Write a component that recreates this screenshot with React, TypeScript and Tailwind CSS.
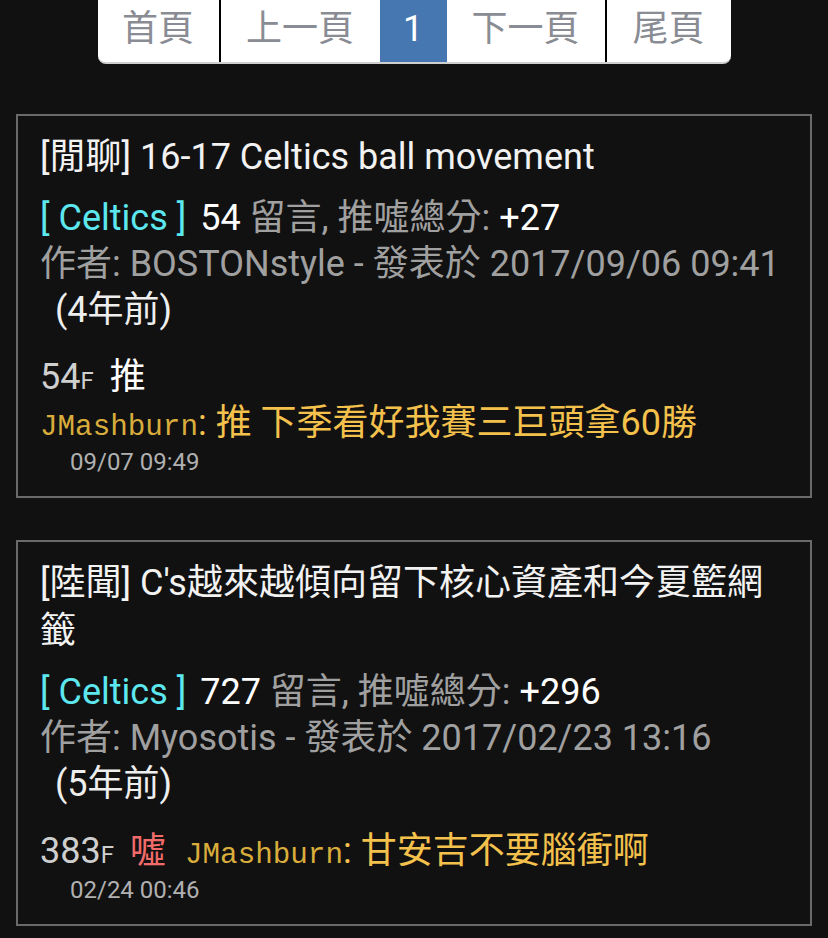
import React from "react";

const FONT = { fontFamily: 'Roboto, "Noto Sans CJK TC", sans-serif' };

function Pager() {
  const btn = "flex items-center justify-center h-full pt-[6px] text-[36px] leading-none";
  return (
    <div className="flex justify-center">
      <div className="flex h-[74px] -mt-[10px] rounded-b-[8px] overflow-hidden border-b-2 border-[#cfcfcf] bg-white">
        <div className={`${btn} w-[123px] text-[#8a8c94] border-r-2 border-black`}>首頁</div>
        <div className={`${btn} w-[159px] text-[#8a8c94]`}>上一頁</div>
        <div className={`${btn} w-[67px] bg-[#4677b0] text-white`}>1</div>
        <div className={`${btn} w-[160px] text-[#8a8c94] border-r-2 border-black`}>下一頁</div>
        <div className={`${btn} w-[124px] text-[#8a8c94]`}>尾頁</div>
      </div>
    </div>
  );
}

type Post = {
  title: string;
  count: string;
  score: string;
  author: string;
  date: string;
  ago: string;
  floor: string;
  tag: string;
  tagColor: string;
  inline: boolean;
  comment: string;
  ctime: string;
};

const posts: Post[] = [
  {
    title: "[閒聊] 16-17 Celtics ball movement",
    count: "54",
    score: "+27",
    author: "BOSTONstyle",
    date: "2017/09/06 09:41",
    ago: "(4年前)",
    floor: "54",
    tag: "推",
    tagColor: "text-white",
    inline: false,
    comment: "推 下季看好我賽三巨頭拿60勝",
    ctime: "09/07 09:49",
  },
  {
    title: "[陸聞] C's越來越傾向留下核心資產和今夏籃網籤",
    count: "727",
    score: "+296",
    author: "Myosotis",
    date: "2017/02/23 13:16",
    ago: "(5年前)",
    floor: "383",
    tag: "噓",
    tagColor: "text-[#f26b6b]",
    inline: true,
    comment: "甘安吉不要腦衝啊",
    ctime: "02/24 00:46",
  },
];

function Comment({ p }: { p: Post }) {
  return (
    <span>
      <span
        className="text-[29.25px] leading-none text-[#d9ad3b]"
        style={{ fontFamily: '"Liberation Mono", monospace' }}
      >
        JMashburn
      </span>
      <span className="text-[#f3c14c]">: {p.comment}</span>
    </span>
  );
}

function Card({ p }: { p: Post }) {
  return (
    <div className="border-2 border-[#6a6a6a] px-[22px] pt-[17px] pb-[18px]">
      <div className="text-[36px] leading-[48px] text-[#f2f2f2]">{p.title}</div>
      <div className="mt-[14px] text-[36px] leading-[46px]">
        <div>
          <span className="text-[#5ce8ee]">[ Celtics ]</span>
          <span className="ml-[14px] text-white">{p.count} </span>
          <span className="text-[#a0a0a0]">留言, 推噓總分: </span>
          <span className="text-white">{p.score}</span>
        </div>
        <div className="text-[#a0a0a0]">
          作者: {p.author} - 發表於 {p.date}
        </div>
        <div className="pl-[15px] text-[#eeeeee]">{p.ago}</div>
      </div>
      <div className="mt-[21px] text-[36px] leading-[46px]">
        <div className="flex items-baseline whitespace-nowrap h-[46px]">
          <span className="text-[#cfcfcf]">{p.floor}</span>
          <span className="text-[24px] leading-none text-[#cfcfcf]">F</span>
          <span className={`ml-[16px] ${p.tagColor}`}>{p.tag}</span>
          {p.inline && (
            <span className="ml-[19px]">
              <Comment p={p} />
            </span>
          )}
        </div>
        {!p.inline && (
          <div className="h-[46px]">
            <Comment p={p} />
          </div>
        )}
        <div className="pl-[30px] text-[24px] leading-[32px] text-[#b0b0b0]">{p.ctime}</div>
      </div>
    </div>
  );
}

export default function App() {
  return (
    <div className="min-h-[938px] bg-[#111111] overflow-hidden" style={FONT}>
      <Pager />
      <div className="mx-[16px] mt-[50px] flex flex-col gap-[42px]">
        {posts.map((p, i) => (
          <Card key={i} p={p} />
        ))}
      </div>
    </div>
  );
}
